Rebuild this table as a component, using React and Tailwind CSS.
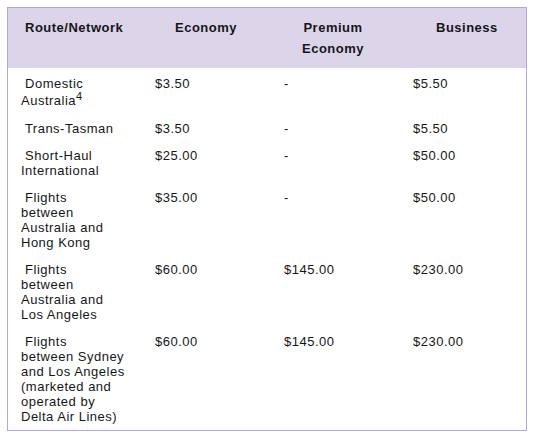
import React from 'react';

const rows = [
  { route: [' Domestic', 'Australia'], sup: '4', eco: '$3.50', prem: '-', bus: '$5.50' },
  { route: [' Trans-Tasman'], eco: '$3.50', prem: '-', bus: '$5.50' },
  { route: [' Short-Haul', 'International'], eco: '$25.00', prem: '-', bus: '$50.00' },
  { route: [' Flights', 'between', 'Australia and', 'Hong Kong'], eco: '$35.00', prem: '-', bus: '$50.00' },
  { route: [' Flights', 'between', 'Australia and', 'Los Angeles'], eco: '$60.00', prem: '$145.00', bus: '$230.00' },
  {
    route: [' Flights', 'between Sydney', 'and Los Angeles', '(marketed and', 'operated by', 'Delta Air Lines)'],
    eco: '$60.00',
    prem: '$145.00',
    bus: '$230.00',
  },
];

const cols = 'grid grid-cols-[140px_129px_129px_1fr]';

export default function App() {
  return (
    <div className="w-[536px] h-[440px] bg-white pt-[7px] pl-[7px]">
      <div
        className="w-[520px] h-[424px] border border-[#b5a6d6] text-[13px] tracking-[0.5px] text-[#161616]"
        style={{ fontFamily: '"Liberation Sans", Arial, sans-serif' }}
      >
        {/* Header */}
        <div className={`${cols} bg-[#dcd5ea] h-[60px] font-bold leading-[21px] pt-[9px]`}>
          <div className="pl-[17px]">Route/Network</div>
          <div className="pl-[27px]">Economy</div>
          <div className="pl-[25px]">
            <div className="w-[62px] text-center">
              Premium
              <br />
              Economy
            </div>
          </div>
          <div className="pl-[30px]">Business</div>
        </div>

        {/* Body */}
        {rows.map((row, i) => (
          <div
            key={i}
            className={`${cols} leading-[15px] ${i === 0 ? 'pt-[8px] pb-[6px]' : 'pt-[7px] pb-[5px]'}`}
          >
            <div className="pl-[13px]">
              {row.route.map((line, j) => (
                <div key={j} className={`whitespace-pre ${row.sup && j > 0 ? 'mt-[2px]' : ''}`}>
                  {line}
                  {row.sup && j === row.route.length - 1 && (
                    <span className="relative -top-[5px] text-[11px] leading-none">{row.sup}</span>
                  )}
                </div>
              ))}
            </div>
            <div className="pl-[7px]">{row.eco}</div>
            <div className="pl-[7px]">{row.prem}</div>
            <div className="pl-[7px]">{row.bus}</div>
          </div>
        ))}
      </div>
    </div>
  );
}
